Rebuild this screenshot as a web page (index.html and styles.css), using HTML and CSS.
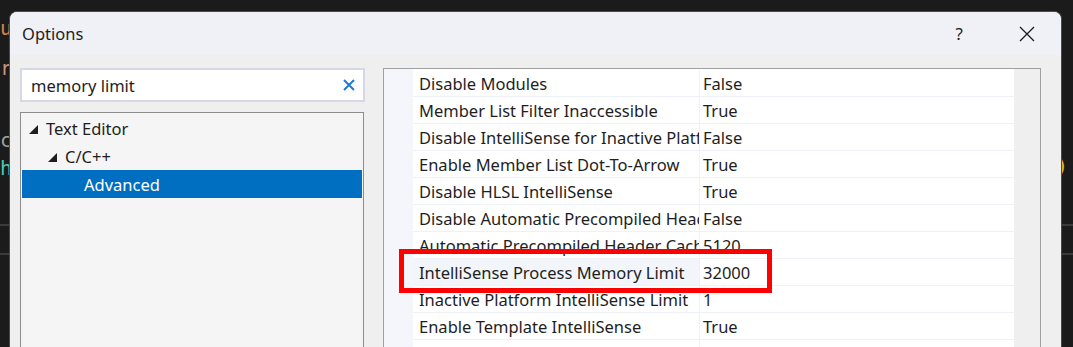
FILE: index.html
```html
<!DOCTYPE html>
<html>
<head>
<meta charset="utf-8">
<link rel="stylesheet" href="styles.css">
<title>Options</title>
</head>
<body>
<div class="screen">
  <div class="edge edge-left">
    <div class="code c-orange l1">uu</div>
    <div class="code c-orange l2">r</div>
    <div class="code c-gray l3">c</div>
    <div class="code c-green l4">h</div>
    <div class="rule r1"></div>
    <div class="rule r2"></div>
  </div>

  <div class="dialog">
    <div class="titlebar">
      <span class="title">Options</span>
      <span class="help">?</span>
      <svg class="close" width="16" height="16" viewBox="0 0 16 16"><path d="M1 1 L15 15 M15 1 L1 15" stroke="#1a1a1a" stroke-width="1.3" fill="none"/></svg>
    </div>
    <div class="content">
      <div class="left">
        <div class="search">
          <span class="search-text">memory limit</span>
          <svg class="clear" width="12" height="12" viewBox="0 0 12 12"><path d="M1 1 L11 11 M11 1 L1 11" stroke="#1f7ad1" stroke-width="2" fill="none"/></svg>
        </div>
        <div class="tree">
          <div class="node lvl0"><svg class="tri" width="9" height="9" viewBox="0 0 9 9"><polygon points="9,0 9,9 0,9" fill="#1e1e1e"/></svg><span>Text Editor</span></div>
          <div class="node lvl1"><svg class="tri" width="9" height="9" viewBox="0 0 9 9"><polygon points="9,0 9,9 0,9" fill="#1e1e1e"/></svg><span>C/C++</span></div>
          <div class="node lvl2 selected"><span>Advanced</span></div>
        </div>
      </div>
      <div class="grid">
        <div class="gutter"></div>
        <div class="rows">
          <div class="row"><div class="name">Disable Modules</div><div class="value">False</div></div>
          <div class="row"><div class="name">Member List Filter Inaccessible</div><div class="value">True</div></div>
          <div class="row"><div class="name">Disable IntelliSense for Inactive Platforms</div><div class="value">False</div></div>
          <div class="row"><div class="name">Enable Member List Dot-To-Arrow</div><div class="value">True</div></div>
          <div class="row"><div class="name">Disable HLSL IntelliSense</div><div class="value">True</div></div>
          <div class="row"><div class="name">Disable Automatic Precompiled Header</div><div class="value">False</div></div>
          <div class="row"><div class="name">Automatic Precompiled Header Cache Quota</div><div class="value">5120</div></div>
          <div class="row hot"><div class="name">IntelliSense Process Memory Limit</div><div class="value">32000</div></div>
          <div class="row"><div class="name">Inactive Platform IntelliSense Limit</div><div class="value">1</div></div>
          <div class="row"><div class="name">Enable Template IntelliSense</div><div class="value">True</div></div>
          <div class="row"><div class="name"></div><div class="value"></div></div>
        </div>
        <div class="scrollbar"></div>
      </div>
    </div>
  </div>

  <div class="edge edge-right">
    <div class="code c-yellow l5">)</div>
    <div class="rule r1"></div>
    <div class="rule r2"></div>
  </div>
</div>
<div class="highlight"></div>
</body>
</html>
```
FILE: styles.css
```css
html, body {
  margin: 0;
  padding: 0;
}
body {
  background: #1b1b1b;
  width: 1073px;
  height: 347px;
  overflow: hidden;
  font-family: "Noto Sans", "Open Sans", sans-serif;
  color: #1e1e1e;
  position: relative;
}
.screen {
  display: flex;
  height: 347px;
}
.edge {
  position: relative;
  overflow: hidden;
  background: #1b1b1b;
}
.edge-left {
  width: 9px;
  flex-shrink: 0;
}
.edge-right {
  flex: 1;
}
.code {
  position: absolute;
  font-family: "DejaVu Sans Mono", monospace;
  font-size: 20px;
  line-height: 24px;
}
.edge-left .code {
  right: 0;
  margin-right: -3px;
}
.c-orange { color: #ce9178; }
.c-gray { color: #a0a0a0; }
.c-green { color: #4ec9b0; }
.c-yellow { color: #e8b620; }
.l1 { top: 16px; color: #d7864e; }
.l2 { top: 56px; }
.l3 { top: 128px; }
.l4 { top: 156px; }
.l5 { top: 154px; left: -6px; }
.rule {
  position: absolute;
  left: 0;
  right: 0;
  height: 2px;
  background: #3a3a3a;
}
.r1 { top: 224px; }
.r2 { top: 253px; }

.dialog {
  width: 1053px;
  flex-shrink: 0;
  margin-top: 11px;
  box-sizing: border-box;
  border: 1px solid #4a4a4a;
  border-bottom: none;
  border-radius: 8px 8px 0 0;
  background: #efefef;
  overflow: hidden;
  display: flex;
  flex-direction: column;
}
.titlebar {
  height: 43px;
  background: #f0f1f6;
  display: flex;
  align-items: center;
  padding: 0 26px 0 12px;
  flex-shrink: 0;
}
.title {
  font-size: 16.5px;
  flex: 1;
  padding-bottom: 1px;
}
.help {
  font-size: 17px;
  margin-right: 56px;
  color: #222;
}
.close {
  display: block;
}
.content {
  display: flex;
  padding: 13px 20px 0 10px;
  gap: 18px;
  flex: 1;
}
.left {
  width: 345px;
  display: flex;
  flex-direction: column;
}
.search {
  height: 34px;
  box-sizing: border-box;
  border: 2px solid #d6d8e6;
  background: #fff;
  display: flex;
  align-items: center;
  padding: 0 8px 0 9px;
}
.search-text {
  flex: 1;
  font-size: 16.5px;
}
.clear { display: block; }
.tree {
  margin-top: 10px;
  margin-right: 1px;
  flex: 1;
  border: 1px solid #8c8c8c;
  background: #f5f5f5;
  padding: 1px;
}
.node {
  height: 28px;
  display: flex;
  align-items: center;
  font-size: 16.5px;
}
.node .tri {
  margin-right: 8px;
  margin-top: 2px;
}
.lvl0 { padding-left: 7px; }
.lvl1 { padding-left: 26px; }
.lvl2 { padding-left: 62px; }
.selected {
  background: #006fc1;
  color: #fff;
}
.grid {
  flex: 1;
  display: flex;
  border: 1px solid #a0a0a0;
  border-bottom: none;
}
.gutter {
  width: 29px;
  background: #f4f6fb;
}
.rows {
  width: 601px;
  background: #fff;
  padding-top: 1px;
}
.row {
  height: 26px;
  border-bottom: 1px solid #eef1f7;
  display: flex;
  font-size: 16.5px;
  line-height: 28px;
  overflow: hidden;
}
.name {
  width: 280px;
  padding-left: 6px;
  border-right: 1px solid #eef1f7;
  white-space: nowrap;
  overflow: hidden;
}
.value {
  padding-left: 3px;
}
.hot .name {
  background: #f2f5fa;
}
.scrollbar {
  flex: 1;
  background: #efefef;
}
.highlight {
  position: absolute;
  left: 399px;
  top: 249px;
  width: 373px;
  height: 44px;
  box-sizing: border-box;
  border: 5px solid #ff0000;
}
```
